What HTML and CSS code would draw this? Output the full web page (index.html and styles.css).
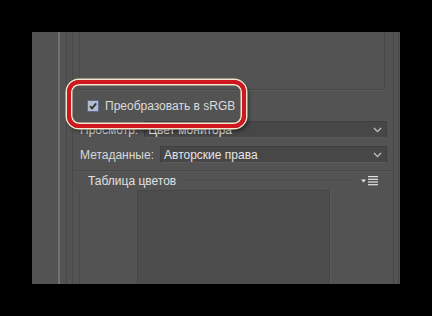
FILE: index.html
```html
<!DOCTYPE html>
<html lang="ru">
<head>
  <meta charset="UTF-8">
  <meta name="viewport" content="width=device-width, initial-scale=1.0">
  <title>Сохранить для Web</title>
  <link rel="stylesheet" href="styles.css">
</head>
<body>
  <div class="panel">
    <div class="rail">
      <div class="rail-inner">
        <div class="content">
          <div class="preview-box"></div>
          <label class="check-row">
            <span class="checkbox">
              <svg width="12" height="12" viewBox="0 0 12 12">
                <rect x="0.5" y="0.5" width="11" height="11" fill="#b3bbcc" stroke="#5d6b90"/>
                <path d="M3 6.2 L5.1 8.4 L9.2 3.4" fill="none" stroke="#2e2e2e" stroke-width="1.7"/>
              </svg>
            </span>
            Преобразовать в sRGB
          </label>
          <div class="field">
            <span class="field-label">Просмотр:</span>
            <div class="select">
              <span>Цвет монитора</span>
              <svg class="chevron" width="9" height="6" viewBox="0 0 9 6"><polyline points="1,1 4.5,4.6 8,1" fill="none" stroke="#c4c4c4" stroke-width="1.3"/></svg>
            </div>
          </div>
          <div class="field">
            <span class="field-label">Метаданные:</span>
            <div class="select">
              <span>Авторские права</span>
              <svg class="chevron" width="9" height="6" viewBox="0 0 9 6"><polyline points="1,1 4.5,4.6 8,1" fill="none" stroke="#c4c4c4" stroke-width="1.3"/></svg>
            </div>
          </div>
          <div class="group">
            <div class="group-head">
              <span class="legend">Таблица цветов</span>
              <span class="head-line"></span>
              <svg class="menu" width="17" height="10" viewBox="0 0 17 10">
                <polygon points="0,3.5 5,3.5 2.5,6.5" fill="#e2e2e2"/>
                <rect x="7" y="0" width="10" height="1.2" fill="#e2e2e2"/>
                <rect x="7" y="2.7" width="10" height="1.2" fill="#e2e2e2"/>
                <rect x="7" y="5.4" width="10" height="1.2" fill="#e2e2e2"/>
                <rect x="7" y="8.1" width="10" height="1.2" fill="#e2e2e2"/>
              </svg>
            </div>
            <div class="group-body">
              <div class="swatches"></div>
            </div>
          </div>
        </div>
      </div>
    </div>
  </div>
  <div class="highlight"></div>
</body>
</html>
```

FILE: styles.css
```css
body {
    margin: 0;
    background-color: #000;
    font-family: "Liberation Sans", Arial, sans-serif;
    font-size: 12px;
    color: #d8d8d8;
}
.panel {
    margin: 32px 0 0 32px;
    width: 368px;
    height: 252px;
    box-sizing: border-box;
    padding-left: 26px;
    padding-right: 1px;
    background-color: #535353;
    display: flex;
}
.rail {
    flex: 1;
    display: flex;
    border-left: 2px solid #737373;
    border-right: 1px solid #474747;
    padding-left: 6px;
}
.rail-inner {
    flex: 1;
    display: flex;
    border-left: 1px solid #484848;
    padding-left: 5px;
}
.content {
    flex: 1;
    display: flex;
    flex-direction: column;
    border-left: 1px solid #494949;
    border-right: 1px solid #494949;
    margin-right: 4px;
}
.preview-box {
    margin-left: 6px;
    width: 306px;
    height: 58px;
    box-sizing: border-box;
    border-left: 1px solid #4a4a4a;
    border-right: 1px solid #4a4a4a;
    border-bottom: 1px solid #474747;
    box-shadow: 0 1px 0 #5c5c5c;
}
.check-row {
    height: 31px;
    display: flex;
    align-items: center;
    gap: 6px;
    padding-left: 14px;
    color: #dcdcdc;
}
.checkbox {
    display: flex;
}
.field {
    display: flex;
    align-items: center;
    gap: 6px;
    height: 17px;
    padding-left: 7px;
    padding-right: 6px;
}
.field + .field {
    margin-top: 8px;
}
.select {
    flex: 1;
    height: 17px;
    box-sizing: border-box;
    display: flex;
    align-items: center;
    justify-content: space-between;
    padding: 0 4px 0 3px;
    background-color: #474747;
    border: 1px solid #3f3f3f;
    border-bottom-color: #5a5a5a;
    color: #e4e4e4;
}
.group {
    flex: 1;
    display: flex;
    flex-direction: column;
    margin-top: 7px;
    border-top: 1px solid #484848;
    box-shadow: inset 0 1px 0 #5b5b5b;
}
.group-head {
    height: 19px;
    display: flex;
    align-items: center;
    padding-left: 15px;
    padding-right: 15px;
}
.legend {
    color: #e0e0e0;
}
.head-line {
    flex: 1;
    height: 1px;
    margin: 0 8px;
    background-color: #4a4a4a;
    box-shadow: 0 1px 0 #5b5b5b;
}
.group-body {
    flex: 1;
    margin-left: 6px;
    border-left: 1px solid #4a4a4a;
    padding-left: 57px;
}
.swatches {
    width: 193px;
    height: 100%;
    box-sizing: border-box;
    background-color: #4d4d4d;
    border: 1px solid #464646;
    border-bottom: none;
    border-top-right-radius: 3px;
    box-shadow: 1px 0 0 #5c5c5c;
}
.highlight {
    position: absolute;
    left: 67px;
    top: 80px;
    width: 179px;
    height: 48px;
    box-sizing: border-box;
    border: 4px solid #d0161f;
    border-radius: 12px;
    box-shadow: 0 0 0 1.5px #f2e6cc, inset 0 0 0 1.5px #f2e6cc, 2px 3px 4px rgba(0, 0, 0, 0.55);
}
```
